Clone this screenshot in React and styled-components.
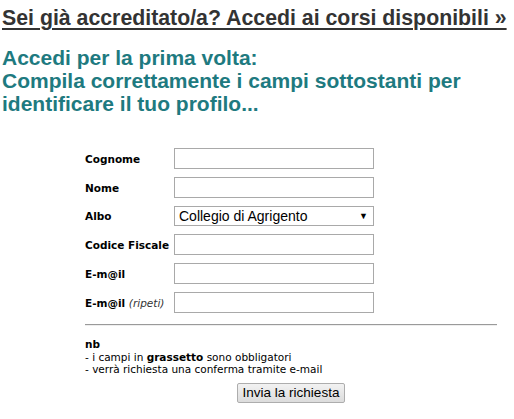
import React from "react";
import styled, { createGlobalStyle } from "styled-components";

const GlobalStyle = createGlobalStyle`
  body {
    margin: 0;
    background: #fff;
    font-family: "Liberation Sans", Arial, sans-serif;
  }
`;

const Page = styled.div`
  width: 514px;
  height: 419px;
  padding: 0 2px;
  box-sizing: border-box;
  overflow: hidden;
`;

const LoginLink = styled.a`
  display: block;
  margin-top: 6px;
  font-size: 21.3px;
  font-weight: bold;
  line-height: 24px;
  color: #333;
  text-decoration: underline;
  text-underline-offset: 3px;
  text-decoration-thickness: 2px;
  cursor: pointer;
`;

const Title = styled.h2`
  margin: 16px 0 0;
  font-size: 21px;
  font-weight: bold;
  line-height: 23px;
  color: #1e7a80;
`;

const Form = styled.form`
  width: 412px;
  margin: 33px 0 0 83px;
  font-family: "DejaVu Sans", Verdana, sans-serif;
  font-size: 11px;
  color: #000;
`;

const Fields = styled.div`
  display: grid;
  grid-template-columns: 89px 200px;
  row-gap: 8px;
  align-items: center;
`;

const Label = styled.label`
  font-weight: bold;
  font-size: 10.5px;
  white-space: nowrap;
  em {
    font-weight: normal;
    font-style: italic;
    color: #333;
  }
`;

const TextInput = styled.input`
  box-sizing: border-box;
  width: 200px;
  height: 21px;
  border: 1px solid #a9a9a9;
  margin: 0;
  padding: 1px 3px;
  font-family: "Liberation Sans", Arial, sans-serif;
  font-size: 13px;
`;

const Select = styled.div`
  box-sizing: border-box;
  width: 200px;
  height: 20px;
  border: 1px solid #a9a9a9;
  display: flex;
  align-items: center;
  justify-content: space-between;
  padding: 0 5px 0 4px;
  font-family: "Liberation Sans", Arial, sans-serif;
  font-size: 14px;
  color: #000;
  span:last-child {
    font-size: 9px;
  }
`;

const Rule = styled.hr`
  margin: 11px 0 0;
  border: 0;
  border-top: 1px solid #9a9a9a;
  border-bottom: 1px solid #eee;
`;

const Notes = styled.div`
  margin-top: 12px;
  line-height: 12.5px;
  font-size: 10.5px;
  b {
    font-weight: bold;
  }
`;

const Actions = styled.div`
  display: flex;
  justify-content: center;
  margin-top: 7px;
`;

const Button = styled.button`
  height: 20px;
  padding: 0 5px;
  border: 1px solid #adadad;
  border-radius: 2px;
  background: linear-gradient(#f2f2f2, #dcdcdc);
  font-family: "Liberation Sans", Arial, sans-serif;
  font-size: 13.5px;
  color: #000;
`;

const fields = [
  { label: "Cognome" },
  { label: "Nome" },
  { label: "Albo", select: "Collegio di Agrigento" },
  { label: "Codice Fiscale" },
  { label: "E-m@il" },
  { label: "E-m@il", extra: "(ripeti)" },
];

export default function App() {
  return (
    <Page>
      <GlobalStyle />
      <LoginLink>Sei già accreditato/a? Accedi ai corsi disponibili »</LoginLink>
      <Title>
        Accedi per la prima volta:
        <br />
        Compila correttamente i campi sottostanti per identificare il tuo
        profilo...
      </Title>
      <Form onSubmit={(e) => e.preventDefault()}>
        <Fields>
          {fields.map((f, i) => (
            <React.Fragment key={i}>
              <Label>
                {f.label} {f.extra && <em>{f.extra}</em>}
              </Label>
              {f.select ? (
                <Select>
                  <span>{f.select}</span>
                  <span>▼</span>
                </Select>
              ) : (
                <TextInput type="text" />
              )}
            </React.Fragment>
          ))}
        </Fields>
        <Rule />
        <Notes>
          <b>nb</b>
          <br />- i campi in <b>grassetto</b> sono obbligatori
          <br />- verrà richiesta una conferma tramite e-mail
        </Notes>
        <Actions>
          <Button type="submit">Invia la richiesta</Button>
        </Actions>
      </Form>
    </Page>
  );
}
